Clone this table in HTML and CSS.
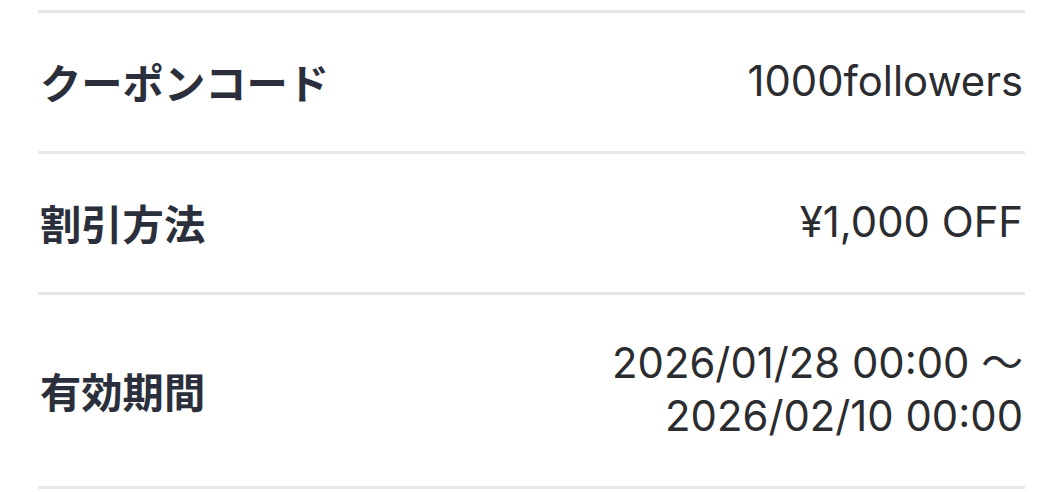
FILE: index.html
```html
<!DOCTYPE html>
<html lang="ja">
<head>
<meta charset="utf-8">
<link rel="stylesheet" href="styles.css">
</head>
<body>
<div class="list">
  <div class="row">
    <div class="label">クーポンコード</div>
    <div class="value">1000followers</div>
  </div>
  <div class="row">
    <div class="label">割引方法</div>
    <div class="value">¥1,000 OFF</div>
  </div>
  <div class="row">
    <div class="label">有効期間</div>
    <div class="value">2026/01/28 00:00 〜<br>2026/02/10 00:00</div>
  </div>
</div>
</body>
</html>
```
FILE: styles.css
```css
html, body {
  margin: 0;
  padding: 0;
  background: #ffffff;
}
.list {
  padding: 10px 30px 0 38px;
}
.row {
  display: flex;
  justify-content: space-between;
  align-items: center;
  border-top: 3px solid #e6e6e9;
  padding: 42px 2px 43px 2px;
  min-height: 53px;
}
.row:last-child {
  border-bottom: 3px solid #e6e6e9;
}
.label {
  font-family: "Noto Sans CJK JP", sans-serif;
  font-weight: 700;
  font-size: 41.3px;
  line-height: 53px;
  color: #2a2f3b;
}
.value {
  font-family: Inter, "Noto Sans CJK JP", sans-serif;
  font-size: 41.8px;
  line-height: 53px;
  color: #2b2c30;
  text-align: right;
}
```
